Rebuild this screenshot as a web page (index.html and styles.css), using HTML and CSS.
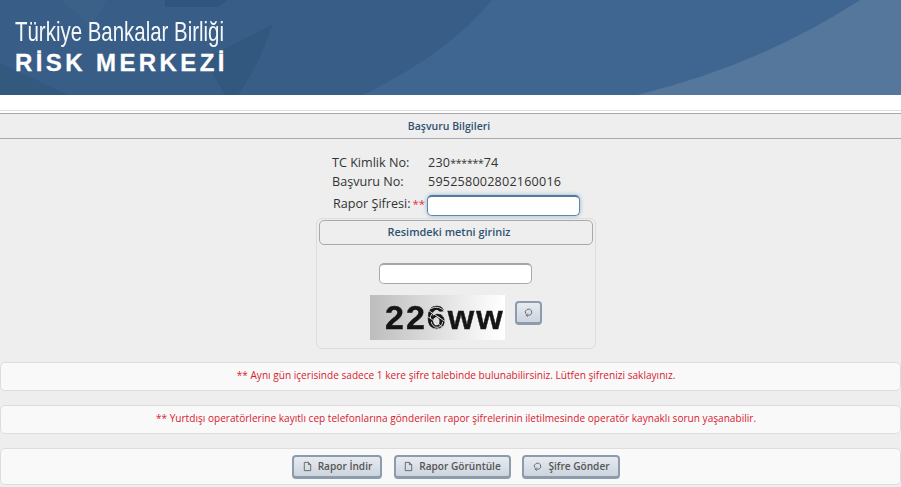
FILE: index.html
```html
<!DOCTYPE html>
<html lang="tr">
<head>
<meta charset="utf-8">
<title>Risk Merkezi</title>
<link rel="stylesheet" href="styles.css">
</head>
<body>
<header class="banner">
  <svg class="banner-art" viewBox="0 0 901 95" preserveAspectRatio="none" aria-hidden="true">
    <rect width="901" height="95" fill="#3f6690"/>
    <path d="M0 0H492Q450 52 363 95H0Z" fill="#385d86"/>
    <path d="M165 0H228L218 7H165Z" fill="#31567d"/>
    <path d="M107 0L92 26L60 0Z" fill="#3c6189"/>
    <path d="M0 63L68 95H0Z" fill="#34597f"/>
    <path d="M272 25Q262 60 238 95H225L205 60Q240 40 272 25Z" fill="#33587f"/>
    <path d="M901 0H860Q760 65 637 95H901Z" fill="#54779b"/>
  </svg>
  <div class="brand">
    <div class="brand-top">Türkiye Bankalar Birliği</div>
    <div class="brand-bottom">RİSK MERKEZİ</div>
  </div>
</header>
<main class="page">
  <h1 class="section-title">Başvuru Bilgileri</h1>
  <section class="details">
    <div class="row"><span class="label">TC Kimlik No:</span><span class="value">230<span class="mask">******</span>74</span></div>
    <div class="row"><span class="label">Başvuru No:</span><span class="value">595258002802160016</span></div>
    <div class="row row-pass">
      <span class="label label-pass">Rapor Şifresi:<span class="req">**</span></span>
      <input class="field field-focus" type="password" aria-label="Rapor Şifresi">
    </div>
  </section>
  <section class="captcha-box">
    <h2 class="captcha-title">Resimdeki metni giriniz</h2>
    <input class="field field-captcha" type="text" aria-label="Resimdeki metin">
    <div class="captcha-row">
      <div class="captcha-img">
        <span>226ww</span>
        <svg class="captcha-scribble" viewBox="0 0 30 30" aria-hidden="true">
          <path d="M3 16a11 11 0 0 1 22-3M5 20a10 10 0 0 0 19 0M8 16a7 7 0 0 1 14-2M9 19a6 6 0 0 0 12 0M12 16a4 4 0 0 1 7 0M3 12l20 14M6 7l18 12"/>
        </svg>
      </div>
      <button class="btn btn-icon" type="button" aria-label="Yenile">
        <svg class="ico" viewBox="0 0 12 12"><path d="M3 7.4A3.5 3.5 0 1 1 7.6 8.9H3.6M5.2 7.2L3.5 8.9l1.7 1.7"/></svg>
      </button>
    </div>
  </section>
  <p class="notice">** Aynı gün içerisinde sadece 1 kere şifre talebinde bulunabilirsiniz. Lütfen şifrenizi saklayınız.</p>
  <p class="notice">** Yurtdışı operatörlerine kayıtlı cep telefonlarına gönderilen rapor şifrelerinin iletilmesinde operatör kaynaklı sorun yaşanabilir.</p>
  <div class="actions">
    <button class="btn" type="button"><svg class="ico" viewBox="0 0 12 12"><path d="M2.5 1.5H7L9.5 4V10.5H2.5ZM7 1.5V4H9.5"/></svg>Rapor İndir</button>
    <button class="btn" type="button"><svg class="ico" viewBox="0 0 12 12"><path d="M2.5 1.5H7L9.5 4V10.5H2.5ZM7 1.5V4H9.5"/></svg>Rapor Görüntüle</button>
    <button class="btn" type="button"><svg class="ico" viewBox="0 0 12 12"><path d="M3 7.4A3.5 3.5 0 1 1 7.6 8.9H3.6M5.2 7.2L3.5 8.9l1.7 1.7"/></svg>Şifre Gönder</button>
  </div>
</main>
</body>
</html>
```
FILE: styles.css
```css
* { box-sizing: border-box; }
html, body { margin: 0; padding: 0; height: 487px; overflow: hidden; }
body { background: #fff; font-family: "Open Sans", "Noto Sans", sans-serif; color: #333; }

.banner { position: relative; height: 95px; overflow: hidden; }
.banner-art { position: absolute; inset: 0; width: 100%; height: 100%; display: block; }
.brand { position: relative; padding: 16px 0 0 15px; color: #fff; font-family: "Liberation Sans", Arial, sans-serif; }
.brand-top { font-size: 28px; line-height: 31px; width: 280px; white-space: nowrap; transform: scaleX(.73); transform-origin: left center; color: #f4f7fa; }
.brand-bottom { font-size: 24px; line-height: 26px; font-weight: 700; letter-spacing: 3.4px; white-space: nowrap; margin-top: 3px; -webkit-text-stroke: .3px #fff; }

.page { margin-top: 15px; border-top: 1px solid #ddd; padding-top: 2px; height: 377px; background: linear-gradient(#fff 2px, #eee 2px); }
.section-title { margin: 0; height: 26px; padding-right: 3px; border-top: 1px solid #a8a8a8; border-bottom: 1px solid #aaa; background: #eee; text-align: center; font-size: 10.5px; line-height: 25px; font-weight: 600; color: #2f5272; }

.details { padding: 14px 0 0 332px; height: 79px; }
.row { display: flex; align-items: center; height: 19px; font-size: 12.6px; color: #333; }
.label { width: 96px; }
.value { letter-spacing: .2px; }
.mask { font-size: 10.5px; letter-spacing: -.2px; }
.row-pass { height: 22px; margin-top: 3px; }
.label-pass { width: 95px; padding: 0 0 3px 1px; white-space: nowrap; }
.req { color: #e8303a; margin-left: 2px; font-size: 11.5px; }

.field { display: block; width: 153px; height: 21px; background: #fff; border: 1px solid #aaa; border-top: 2px solid #a6a6a6; border-radius: 5px; padding: 0 4px; outline: 0; }
.field-focus { border: 1px solid #5f87a8; border-top: 2px solid #55799a; box-shadow: 0 0 4px #8fb4d2; }

.captcha-box { width: 280px; height: 131px; margin: 0 0 13px 316px; border: 1px solid #ddd; border-radius: 6px; padding: 1px 2px; }
.captcha-title { margin: 0; height: 25px; padding-right: 14px; border: 1px solid #a9a9a9; border-radius: 5px; text-align: center; font-size: 10.9px; line-height: 22px; font-weight: 600; color: #2f5272; }
.field-captcha { margin: 18px 0 0 60px; }
.captcha-row { display: flex; align-items: flex-start; margin: 11px 0 0 51px; }
.captcha-img { position: relative; width: 135px; height: 45px; background: linear-gradient(90deg, #bdbdbd, #f7f7f7 85%, #fff); padding-left: 15px; overflow: hidden; }
.captcha-img span { display: block; font-family: "Liberation Sans", Arial, sans-serif; font-weight: 700; font-size: 34px; line-height: 45px; letter-spacing: 2px; white-space: nowrap; color: #151515; -webkit-text-stroke: .4px #151515; filter: blur(.4px); }
.captcha-scribble { position: absolute; left: 53px; top: 9px; width: 28px; height: 28px; fill: none; stroke: #ddd; stroke-width: 1; }

.btn { display: inline-flex; align-items: center; justify-content: center; height: 24px; padding: 0; border: 2px solid #8c9cad; border-bottom-width: 3px; border-radius: 4px; background: linear-gradient(#e7ebf0, #ccd4de); font-family: inherit; font-size: 10.1px; font-weight: 600; color: #555; gap: 5px; }
.btn-icon { width: 27px; margin: 6px 0 0 10px; }
.ico { width: 11px; height: 11px; fill: none; stroke: #555; stroke-width: .9; }

.notice { margin: 0 0 14px; height: 29px; padding-left: 11px; background: #f9f9f9; border: 1px solid #ddd; border-radius: 5px; text-align: center; font-size: 10.1px; line-height: 25px; color: #d8192f; }
.actions { height: 37px; background: #f9f9f9; border: 1px solid #ddd; border-radius: 5px; display: flex; justify-content: center; align-items: center; gap: 11.5px; padding: 0 0 0 11px; }
.actions .btn:nth-child(1) { width: 90px; }
.actions .btn:nth-child(2) { width: 117px; }
.actions .btn:nth-child(3) { width: 98px; }
```
